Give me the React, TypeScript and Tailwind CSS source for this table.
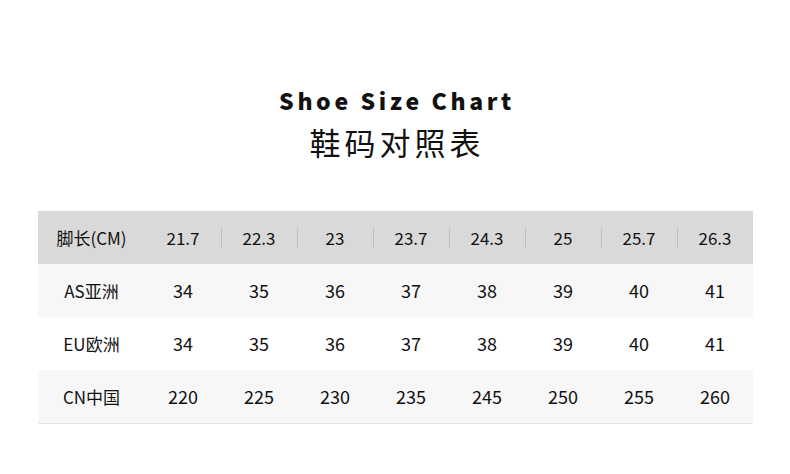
import React from 'react';

const FONT = '"Noto Sans CJK SC", "Noto Sans", sans-serif';

const HEADER = ['21.7', '22.3', '23', '23.7', '24.3', '25', '25.7', '26.3'];

const ROWS = [
  { label: 'AS亚洲', values: ['34', '35', '36', '37', '38', '39', '40', '41'], bg: 'bg-[#f7f7f7]' },
  { label: 'EU欧洲', values: ['34', '35', '36', '37', '38', '39', '40', '41'], bg: 'bg-white' },
  { label: 'CN中国', values: ['220', '225', '230', '235', '245', '250', '255', '260'], bg: 'bg-[#f7f7f7]' },
];

const App: React.FC = () => {
  return (
    <div className="w-[790px] h-[474px] bg-white text-[#111]" style={{ fontFamily: FONT }}>
      {/* --- TITLE --- */}
      <div className="flex flex-col items-center pt-[84px]">
        <h1 className="text-[23px] font-black leading-[32px] tracking-[3.6px] pl-[4px]">Shoe Size Chart</h1>
        <h2 className="mt-[7px] text-[31px] leading-[38px] tracking-[4px] pl-[4px]">鞋码对照表</h2>
      </div>

      {/* --- TABLE --- */}
      <div className="mx-[38px] mt-[50px] w-[715px] border-b border-[#e2e2e2]">
        <div className="grid grid-cols-[107px_repeat(8,76px)] h-[53px] bg-[#d9d9d9] items-center text-[17px]">
          <div className="text-center">脚长(CM)</div>
          {HEADER.map((v, i) => (
            <div key={v} className="relative text-center">
              {i > 0 && <span className="absolute left-0 top-1/2 -translate-y-1/2 h-[20px] w-px bg-[#bdbdbd]" />}
              {v}
            </div>
          ))}
        </div>
        {ROWS.map((row) => (
          <div key={row.label} className={`grid grid-cols-[107px_repeat(8,76px)] h-[53px] items-center text-[18px] ${row.bg}`}>
            <div className="text-center text-[17px]">{row.label}</div>
            {row.values.map((v, i) => (
              <div key={i} className="text-center">{v}</div>
            ))}
          </div>
        ))}
      </div>
    </div>
  );
};

export default App;
